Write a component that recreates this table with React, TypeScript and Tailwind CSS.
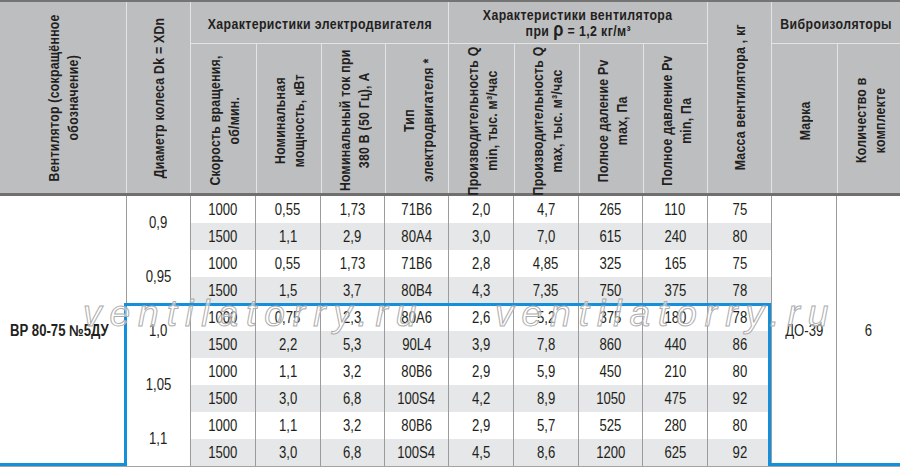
import React from "react";

const dataW = [
  "w-[65px]",
  "w-[65px]",
  "w-[64px]",
  "w-[64px]",
  "w-[65px]",
  "w-[65px]",
  "w-[64px]",
  "w-[65px]",
  "w-[64px]",
];

const rows: string[][] = [
  ["1000", "0,55", "1,73", "71B6", "2,0", "4,7", "265", "110", "75"],
  ["1500", "1,1", "2,9", "80A4", "3,0", "7,0", "615", "240", "80"],
  ["1000", "0,55", "1,73", "71B6", "2,8", "4,85", "325", "165", "75"],
  ["1500", "1,5", "3,7", "80B4", "4,3", "7,35", "750", "375", "78"],
  ["1000", "0,75", "2,3", "80A6", "2,6", "5,2", "375", "180", "78"],
  ["1500", "2,2", "5,3", "90L4", "3,9", "7,8", "860", "440", "86"],
  ["1000", "1,1", "3,2", "80B6", "2,9", "5,9", "450", "210", "80"],
  ["1500", "3,0", "6,8", "100S4", "4,2", "8,9", "1050", "475", "92"],
  ["1000", "1,1", "3,2", "80B6", "2,9", "5,7", "525", "280", "80"],
  ["1500", "3,0", "6,8", "100S4", "4,5", "8,6", "1200", "625", "92"],
];

const diams = ["0,9", "0,95", "1,0", "1,05", "1,1"];

function N({ children, left }: { children: React.ReactNode; left?: boolean }) {
  return (
    <span
      className={`inline-block whitespace-nowrap scale-x-[0.82] ${left ? "origin-left" : "origin-center"}`}
    >
      {children}
    </span>
  );
}

function VText({ children }: { children: React.ReactNode }) {
  return (
    <div className="shrink-0 [writing-mode:vertical-rl] rotate-180 scale-y-[0.82] whitespace-nowrap text-center leading-[19px] tracking-[0.3px]">
      {children}
    </div>
  );
}

function SubCell({ w, children }: { w: string; children: React.ReactNode }) {
  return (
    <div
      className={`${w} shrink-0 min-h-0 border-l border-[#e4e4e4] flex [align-items:unsafe_center] [justify-content:unsafe_center] pt-[4px]`}
    >
      <VText>{children}</VText>
    </div>
  );
}

function Watermark({ pos }: { pos: string }) {
  return (
    <span
      className={`absolute ${pos} top-[295px] italic text-[37px] leading-none tracking-[8px] font-['Liberation_Sans',sans-serif] text-white/55 [-webkit-text-stroke:1px_#adadad] pointer-events-none whitespace-nowrap`}
    >
      ventilatorry.ru
    </span>
  );
}

export default function App() {
  return (
    <div className="relative w-[900px] h-[467px] overflow-hidden bg-white text-[#231f20] font-['Liberation_Sans',Arial,sans-serif] text-[16px]">
      {/* Header */}
      <div className="flex h-[196px] bg-[#bdbec0] border-t-2 border-b-[3px] border-t-[#747474] border-b-[#6f6f6f] font-bold text-[15px]">
        <div className="w-[126px] shrink-0 min-h-0 flex [align-items:unsafe_center] [justify-content:unsafe_center]">
          <VText>
            Вентилятор (сокращённое
            <br />
            обозначение)
          </VText>
        </div>
        <div className="w-[64px] shrink-0 min-h-0 border-l border-[#e4e4e4] flex [align-items:unsafe_center] [justify-content:unsafe_center]">
          <VText>Диаметр колеса Dk = XDn</VText>
        </div>
        <div className="w-[258px] shrink-0 min-h-0 border-l border-[#e4e4e4] flex flex-col">
          <div className="h-[42px] shrink-0 border-b border-[#e4e4e4] flex items-center [justify-content:unsafe_center] pt-[4px] tracking-[0.5px]">
            <N>Характеристики электродвигателя</N>
          </div>
          <div className="flex flex-1 min-h-0 h-[149px] -ml-px">
            <SubCell w="w-[66px]">
              Скорость вращения,
              <br />
              об/мин.
            </SubCell>
            <SubCell w="w-[65px]">
              Номинальная
              <br />
              мощность, кВт
            </SubCell>
            <SubCell w="w-[64px]">
              Номинальный ток при
              <br />
              380 В (50 Гц), А
            </SubCell>
            <SubCell w="w-[64px]">
              Тип
              <br />
              электродвигателя *
            </SubCell>
          </div>
        </div>
        <div className="w-[259px] shrink-0 min-h-0 border-l border-[#e4e4e4] flex flex-col">
          <div className="h-[42px] shrink-0 border-b border-[#e4e4e4] flex flex-col items-center justify-center leading-[15px] tracking-[0.5px]">
            <N>Характеристики вентилятора</N>
            <N>
              при <span className="text-[20px] leading-[15px]">ρ</span> = 1,2 кг/м³
            </N>
          </div>
          <div className="flex flex-1 min-h-0 h-[149px] -ml-px">
            <SubCell w="w-[66px]">
              Производительность Q
              <br />
              min, тыс. м³/час
            </SubCell>
            <SubCell w="w-[65px]">
              Производительность Q
              <br />
              max, тыс. м³/час
            </SubCell>
            <SubCell w="w-[64px]">
              Полное даление Pv
              <br />
              max, Па
            </SubCell>
            <SubCell w="w-[65px]">
              Полное давление Pv
              <br />
              min, Па
            </SubCell>
          </div>
        </div>
        <div className="w-[64px] shrink-0 min-h-0 border-l border-[#e4e4e4] flex [align-items:unsafe_center] [justify-content:unsafe_center]">
          <VText>Масса вентилятора , кг</VText>
        </div>
        <div className="w-[129px] shrink-0 min-h-0 border-l border-[#e4e4e4] flex flex-col">
          <div className="h-[42px] shrink-0 border-b border-[#e4e4e4] flex items-center justify-center pt-[4px] tracking-[0.5px]">
            <N>Виброизоляторы</N>
          </div>
          <div className="flex flex-1 min-h-0 h-[149px] -ml-px">
            <SubCell w="w-[66px]">Марка</SubCell>
            <SubCell w="w-[64px]">
              Количество в
              <br />
              комплекте
            </SubCell>
          </div>
        </div>
      </div>

      {/* Body */}
      <div className="flex h-[271px] border-b border-[#a3a3a3]">
        <div className="w-[126px] shrink-0 flex items-center pl-[10px] font-bold">
          <N left>ВР 80-75 №5ДУ</N>
        </div>
        <div className="w-[64px] shrink-0 border-l border-[#9c9c9c] flex flex-col">
          {diams.map((d) => (
            <div key={d} className="h-[54px] flex items-center justify-center">
              <N>{d}</N>
            </div>
          ))}
        </div>
        <div className="w-[581px] shrink-0 flex flex-col">
          {rows.map((r, i) => (
            <div
              key={i}
              className={`flex h-[27px] ${i % 2 === 1 ? "bg-[#e6e7e8]" : "bg-white"}`}
            >
              {r.map((v, j) => (
                <div
                  key={j}
                  className={`${dataW[j]} shrink-0 border-l border-[#9c9c9c] flex items-center justify-center`}
                >
                  <N>{v}</N>
                </div>
              ))}
            </div>
          ))}
        </div>
        <div className="w-[65px] shrink-0 border-l border-[#9c9c9c] flex items-center justify-center">
          <N>ДО-39</N>
        </div>
        <div className="w-[64px] shrink-0 border-l border-[#9c9c9c] flex items-center justify-center">
          <N>6</N>
        </div>
      </div>

      {/* Blue highlight outline */}
      <svg
        className="absolute left-0 top-0 pointer-events-none"
        width="900"
        height="467"
        viewBox="0 0 900 467"
      >
        <polyline
          points="0,464.5 125.5,464.5 125.5,304.5 769.5,304.5 769.5,464.5 900,464.5"
          fill="none"
          stroke="#138fdc"
          strokeWidth="3"
        />
      </svg>

      {/* Watermarks */}
      <Watermark pos="left-[83px]" />
      <Watermark pos="left-[495px]" />
    </div>
  );
}
